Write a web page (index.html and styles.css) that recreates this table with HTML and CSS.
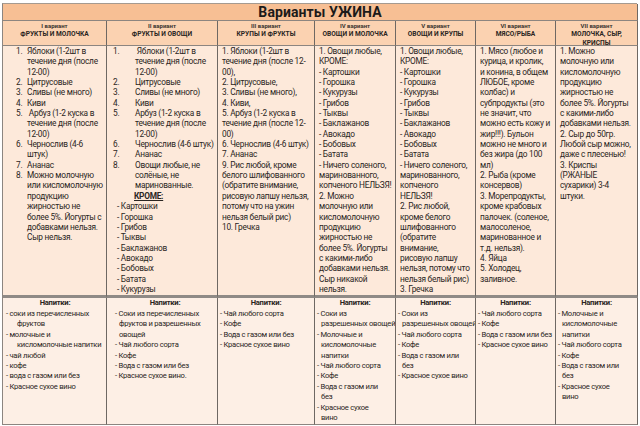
FILE: index.html
```html
<!DOCTYPE html>
<html lang="ru">
<head>
<meta charset="utf-8">
<title>Варианты УЖИНА</title>
<link rel="stylesheet" href="styles.css">
</head>
<body>
<div class="table">
  <div class="title">Варианты УЖИНА</div>

  <div class="head"><span class="v">I вариант</span><span class="n">ФРУКТЫ И МОЛОЧКА</span></div>
  <div class="head"><span class="v">II вариант</span><span class="n">ФРУКТЫ И ОВОЩИ</span></div>
  <div class="head"><span class="v">III вариант</span><span class="n">КРУПЫ И ФРУКТЫ</span></div>
  <div class="head"><span class="v">IV вариант</span><span class="n">ОВОЩИ И МОЛОЧКА</span></div>
  <div class="head"><span class="v">V вариант</span><span class="n">ОВОЩИ И КРУПЫ</span></div>
  <div class="head"><span class="v">VI вариант</span><span class="n">МЯСО/РЫБА</span></div>
  <div class="head"><span class="v">VII вариант</span><span class="n">МОЛОЧКА, СЫР,<br>КРИСПЫ</span></div>

  <div class="cell c1">
    <div class="li"><span class="num">1.</span><span>Яблоки  (1-2шт в<br>течение дня (после<br>12-00)</span></div>
    <div class="li"><span class="num">2.</span><span>Цитрусовые</span></div>
    <div class="li"><span class="num">3.</span><span>Сливы (не много)</span></div>
    <div class="li"><span class="num">4.</span><span>Киви</span></div>
    <div class="li"><span class="num">5.</span><span>&nbsp;Арбуз  (1-2 куска в<br>течение дня  (после<br>12-00)</span></div>
    <div class="li"><span class="num">6.</span><span>Чернослив (4-6<br>штук)</span></div>
    <div class="li"><span class="num">7.</span><span>Ананас</span></div>
    <div class="li"><span class="num">8.</span><span>Можно молочную<br>или кисломолочную<br>продукцию<br>жирностью не<br>более 5%. Йогурты с<br>добавками нельзя.<br>Сыр нельзя.</span></div>
  </div>

  <div class="cell c2">
    <div class="li"><span class="num">1.</span><span>&nbsp;Яблоки (1-2шт в<br>течение дня (после<br>12-00)</span></div>
    <div class="li"><span class="num">2.</span><span>Цитрусовые</span></div>
    <div class="li"><span class="num">3.</span><span>Сливы (не много)</span></div>
    <div class="li"><span class="num">4.</span><span>Киви</span></div>
    <div class="li"><span class="num">5.</span><span>Арбуз  (1-2 куска в<br>течение дня (после<br>12-00)</span></div>
    <div class="li"><span class="num">6.</span><span>Чернослив (4-6 штук)</span></div>
    <div class="li"><span class="num">7.</span><span>Ананас</span></div>
    <div class="li"><span class="num">8.</span><span>Овощи любые, не<br>солёные, не<br>маринованные.</span></div>
    <div class="krome">КРОМЕ:</div>
    <div class="dash">- Картошки<br>- Горошка<br>- Грибов<br>- Тыквы<br>- Баклажанов<br>- Авокадо<br>- Бобовых<br>- Батата<br>- Кукурузы</div>
  </div>

  <div class="cell plain">1. Яблоки (1-2шт в<br>течение дня (после 12-<br>00),<br>2. Цитрусовые,<br>3. Сливы (не много),<br>4. Киви,<br>5. Арбуз (1-2 куска в<br>течение дня (после 12-<br>00)<br>6. Чернослив (4-6 штук)<br>7. Ананас<br>9. Рис любой, кроме<br>белого шлифованного<br>(обратите внимание,<br>рисовую лапшу нельзя,<br>потому что на ужин<br>нельзя белый рис)<br>10. Гречка</div>

  <div class="cell plain">1. Овощи любые,<br>КРОМЕ:<br>- Картошки<br>- Горошка<br>- Кукурузы<br>- Грибов<br>- Тыквы<br>- Баклажанов<br>- Авокадо<br>- Бобовых<br>- Батата<br>- Ничего соленого,<br>маринованного,<br>копченого НЕЛЬЗЯ!<br>2. Можно<br>молочную или<br>кисломолочную<br>продукцию<br>жирностью не<br>более 5%. Йогурты<br>с какими-либо<br>добавками нельзя.<br>Сыр никакой<br>нельзя.</div>

  <div class="cell plain">1. Овощи любые,<br>КРОМЕ:<br>- Картошки<br>- Горошка<br>- Кукурузы<br>- Грибов<br>- Тыквы<br>- Баклажанов<br>- Авокадо<br>- Бобовых<br>- Батата<br>- Ничего соленого,<br>маринованного,<br>копченого<br>НЕЛЬЗЯ!<br>2. Рис любой,<br>кроме белого<br>шлифованного<br>(обратите<br>внимание,<br>рисовую лапшу<br>нельзя, потому что<br>нельзя белый рис)<br>3. Гречка</div>

  <div class="cell plain">1. Мясо (любое и<br>курица, и кролик,<br>и конина, в общем<br>ЛЮБОЕ, кроме<br>колбас) и<br>субпродукты (это<br>не значит, что<br>можно есть кожу и<br>жир!!!). Бульон<br>можно не много и<br>без жира (до 100<br>мл)<br>2. Рыба (кроме<br>консервов)<br>3. Морепродукты,<br>кроме крабовых<br>палочек. (соленое,<br>малосоленое,<br>маринованное и<br>т.д. нельзя).<br>4. Яйца<br>5. Холодец,<br>заливное.</div>

  <div class="cell plain">1. Можно<br>молочную или<br>кисломолочную<br>продукцию<br>жирностью не<br>более 5%. Йогурты<br>с какими-либо<br>добавками нельзя.<br>2. Сыр до 50гр.<br>Любой сыр можно,<br>даже с плесенью!<br>3. Криспы<br>(РЖАНЫЕ<br>сухарики) 3-4<br>штуки.</div>

  <div class="drink d1">
    <div class="dh">Напитки:</div>
    <div class="di">- соки из перечисленных<br>фруктов</div>
    <div class="di">- молочные и<br>кисломолочные напитки</div>
    <div class="di">- чай любой</div>
    <div class="di">- кофе</div>
    <div class="di">- вода с газом или без</div>
    <div class="di">- Красное сухое вино</div>
  </div>
  <div class="drink d2">
    <div class="dh">Напитки:</div>
    <div class="di">- Соки из перечисленных<br>фруктов и разрешенных<br>овощей</div>
    <div class="di">- Чай любого сорта</div>
    <div class="di">- Кофе</div>
    <div class="di">- Вода с газом или без</div>
    <div class="di">- Красное сухое вино.</div>
  </div>
  <div class="drink">
    <div class="dh">Напитки:</div>
    <div class="di">- Чай любого сорта</div>
    <div class="di">- Кофе</div>
    <div class="di">- Вода с газом или без</div>
    <div class="di">- Красное сухое вино</div>
  </div>
  <div class="drink">
    <div class="dh">Напитки:</div>
    <div class="di">- Соки из<br>разрешенных овощей</div>
    <div class="di">- Молочные и<br>кисломолочные<br>напитки</div>
    <div class="di">- Чай любого сорта</div>
    <div class="di">- Кофе</div>
    <div class="di">- Вода с газом или<br>без</div>
    <div class="di">- Красное сухое<br>вино</div>
  </div>
  <div class="drink">
    <div class="dh">Напитки:</div>
    <div class="di">- Соки из<br>разрешенных овощей</div>
    <div class="di">- Чай любого сорта</div>
    <div class="di">- Кофе</div>
    <div class="di">- Вода с газом или<br>без</div>
    <div class="di">- Красное сухое вино</div>
  </div>
  <div class="drink">
    <div class="dh">Напитки:</div>
    <div class="di">- Чай любого сорта</div>
    <div class="di">- Кофе</div>
    <div class="di">- Вода с газом или без</div>
    <div class="di">- Красное сухое вино</div>
  </div>
  <div class="drink">
    <div class="dh">Напитки:</div>
    <div class="di">- Молочные и<br>кисломолочные<br>напитки</div>
    <div class="di">- Чай любого сорта</div>
    <div class="di">- Кофе</div>
    <div class="di">- Вода с газом или<br>без</div>
    <div class="di">- Красное сухое<br>вино</div>
  </div>
</div>
</body>
</html>
```

FILE: styles.css
```css
html, body {
  margin: 0;
  padding: 0;
  background: #ffffff;
}
body {
  font-family: Roboto, "Noto Sans", "DejaVu Sans", sans-serif;
  color: #2a2522;
}
.table {
  display: grid;
  grid-template-columns: 104px 111px 97px 81px 80px 80px 82px;
  grid-template-rows: 17px 25px 252px 127px;
  width: 635px;
  margin: 3px 0 0 2px;
  border-left: 1px solid #8c8580;
  border-top: 1px solid #a59a90;
  box-sizing: border-box;
}
.table > div {
  box-sizing: border-box;
  border-right: 1px solid #6e6863;
  border-bottom: 1px solid #8c8580;
}
.title {
  grid-column: 1 / -1;
  background: #f7bf94;
  font-weight: 700;
  font-size: 14px;
  line-height: 16px;
  text-align: center;
  color: #1c1a19;
  letter-spacing: 0.1px;
}
.head {
  background: #fbd2b1;
  display: flex;
  flex-direction: column;
  align-items: center;
  text-align: center;
  padding-top: 1px;
}
.head .v {
  font-size: 6px;
  line-height: 8.3px;
  font-weight: 700;
  color: #3a3430;
}
.head .n {
  font-size: 6.6px;
  line-height: 8.3px;
  font-weight: 700;
  color: #2a2522;
}
.cell {
  background: #fde9da;
  font-size: 8.3px;
  line-height: 10.35px;
  letter-spacing: -0.25px;
  white-space: nowrap;
  overflow: hidden;
  border-bottom: 3px solid #8f8a86 !important;
}
.plain {
  padding-left: 4px;
}
.li {
  display: flex;
}
.c1 .num {
  width: 11px;
  margin-left: 13px;
  flex: none;
}
.c2 .num {
  width: 22px;
  margin-left: 6px;
  flex: none;
}
.krome {
  padding-left: 27px;
  font-weight: 700;
  text-decoration: underline;
}
.dash {
  padding-left: 10px;
}
.drink {
  background: #fdefe5;
  font-size: 7.6px;
  line-height: 10.4px;
  letter-spacing: -0.25px;
  white-space: nowrap;
  overflow: hidden;
  padding-left: 2px;
}
.dh {
  text-align: center;
  font-weight: 700;
  margin-bottom: 0.5px;
  padding-right: 2px;
}
.di {
  padding-left: 4px;
  text-indent: -4px;
}
.d1 .di {
  padding-left: 11px;
  text-indent: -11px;
}
.d1 {
  padding-left: 3px;
}
.d2 {
  padding-left: 8px;
}
```
